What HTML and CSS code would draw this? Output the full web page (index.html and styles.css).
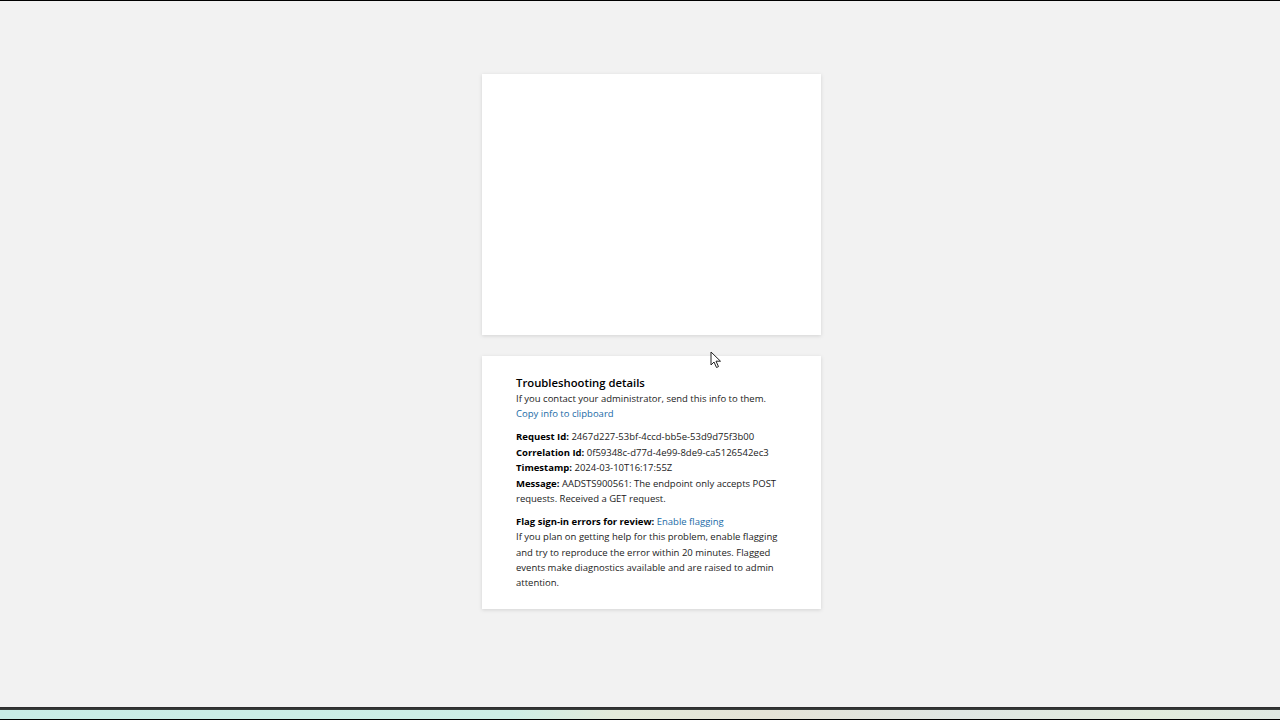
FILE: index.html
```html
<!DOCTYPE html>
<html lang="en">
<head>
<meta charset="utf-8">
<title>Sign in</title>
<link rel="stylesheet" href="styles.css">
</head>
<body>
<div class="topline"></div>
<main class="stage">
  <section class="card card-main"></section>
  <section class="card card-details">
    <h2 class="details-title">Troubleshooting details</h2>
    <p class="line">If you contact your administrator, send this info to them.</p>
    <p class="line"><a class="link" href="#">Copy info to clipboard</a></p>
    <div class="group">
      <p class="line"><b>Request Id:</b> 2467d227-53bf-4ccd-bb5e-53d9d75f3b00</p>
      <p class="line"><b>Correlation Id:</b> 0f59348c-d77d-4e99-8de9-ca5126542ec3</p>
      <p class="line"><b>Timestamp:</b> 2024-03-10T16:17:55Z</p>
      <p class="line"><b>Message:</b> AADSTS900561: The endpoint only accepts POST requests. Received a GET request.</p>
    </div>
    <div class="group">
      <p class="line"><b>Flag sign-in errors for review:</b> <a class="link" href="#">Enable flagging</a></p>
      <p class="line">If you plan on getting help for this problem, enable flagging and try to reproduce the error within 20 minutes. Flagged events make diagnostics available and are raised to admin attention.</p>
    </div>
  </section>
  <svg class="cursor" width="12" height="18" viewBox="0 0 12 18" aria-hidden="true">
    <path d="M1 1 L1 14 L4 11 L6.5 16.5 L8.5 15.6 L6 10.2 L10.5 10.2 Z" fill="#fff" stroke="#222" stroke-width="1" stroke-linejoin="round"/>
  </svg>
</main>
<footer class="taskbar">
  <div class="taskbar-edge"></div>
  <div class="taskbar-glass"></div>
  <div class="taskbar-bottom"></div>
</footer>
</body>
</html>
```

FILE: styles.css
```css
* { box-sizing: border-box; }
html, body { margin: 0; padding: 0; }
body {
  width: 1280px;
  height: 720px;
  overflow: hidden;
  background: #f2f2f2;
  display: flex;
  flex-direction: column;
  font-family: "Segoe UI", "Open Sans", "Noto Sans", sans-serif;
  color: #1b1b1b;
}
.topline { height: 1px; background: #000; flex: none; }
.stage {
  position: relative;
  flex: 1;
  display: flex;
  flex-direction: column;
  align-items: center;
  padding-top: 73px;
  padding-left: 23px;
  gap: 21px;
}
.card {
  width: 339px;
  background: #fff;
  box-shadow: 0 1px 4px rgba(0,0,0,0.13);
}
.card-main { height: 261px; }
.card-details {
  height: 253px;
  padding: 19px 30px 0 34px;
  font-size: 9.5px;
  line-height: 15.4px;
}
.details-title {
  margin: 0;
  font-size: 11.3px;
  line-height: 16px;
  font-weight: 600;
  color: #000;
}
.line { margin: 0; }
.line b { font-weight: 700; color: #000; }
.group { margin-top: 7.5px; }
.link { color: #1a6aa6; text-decoration: none; }
.cursor { position: absolute; left: 710px; top: 350px; }
.taskbar { flex: none; height: 13px; display: flex; flex-direction: column; }
.taskbar-edge { height: 3px; background: linear-gradient(#2b2b2b, #3a3f3d); }
.taskbar-glass {
  flex: 1;
  background: linear-gradient(90deg, #c8ece6 0%, #cdeee6 40%, #e3ead9 48%, #e5e3d6 60%, #dfe6e3 75%, #e2ecdc 90%, #dfe9e2 100%);
}
.taskbar-bottom { height: 1px; background: #000; }
```
